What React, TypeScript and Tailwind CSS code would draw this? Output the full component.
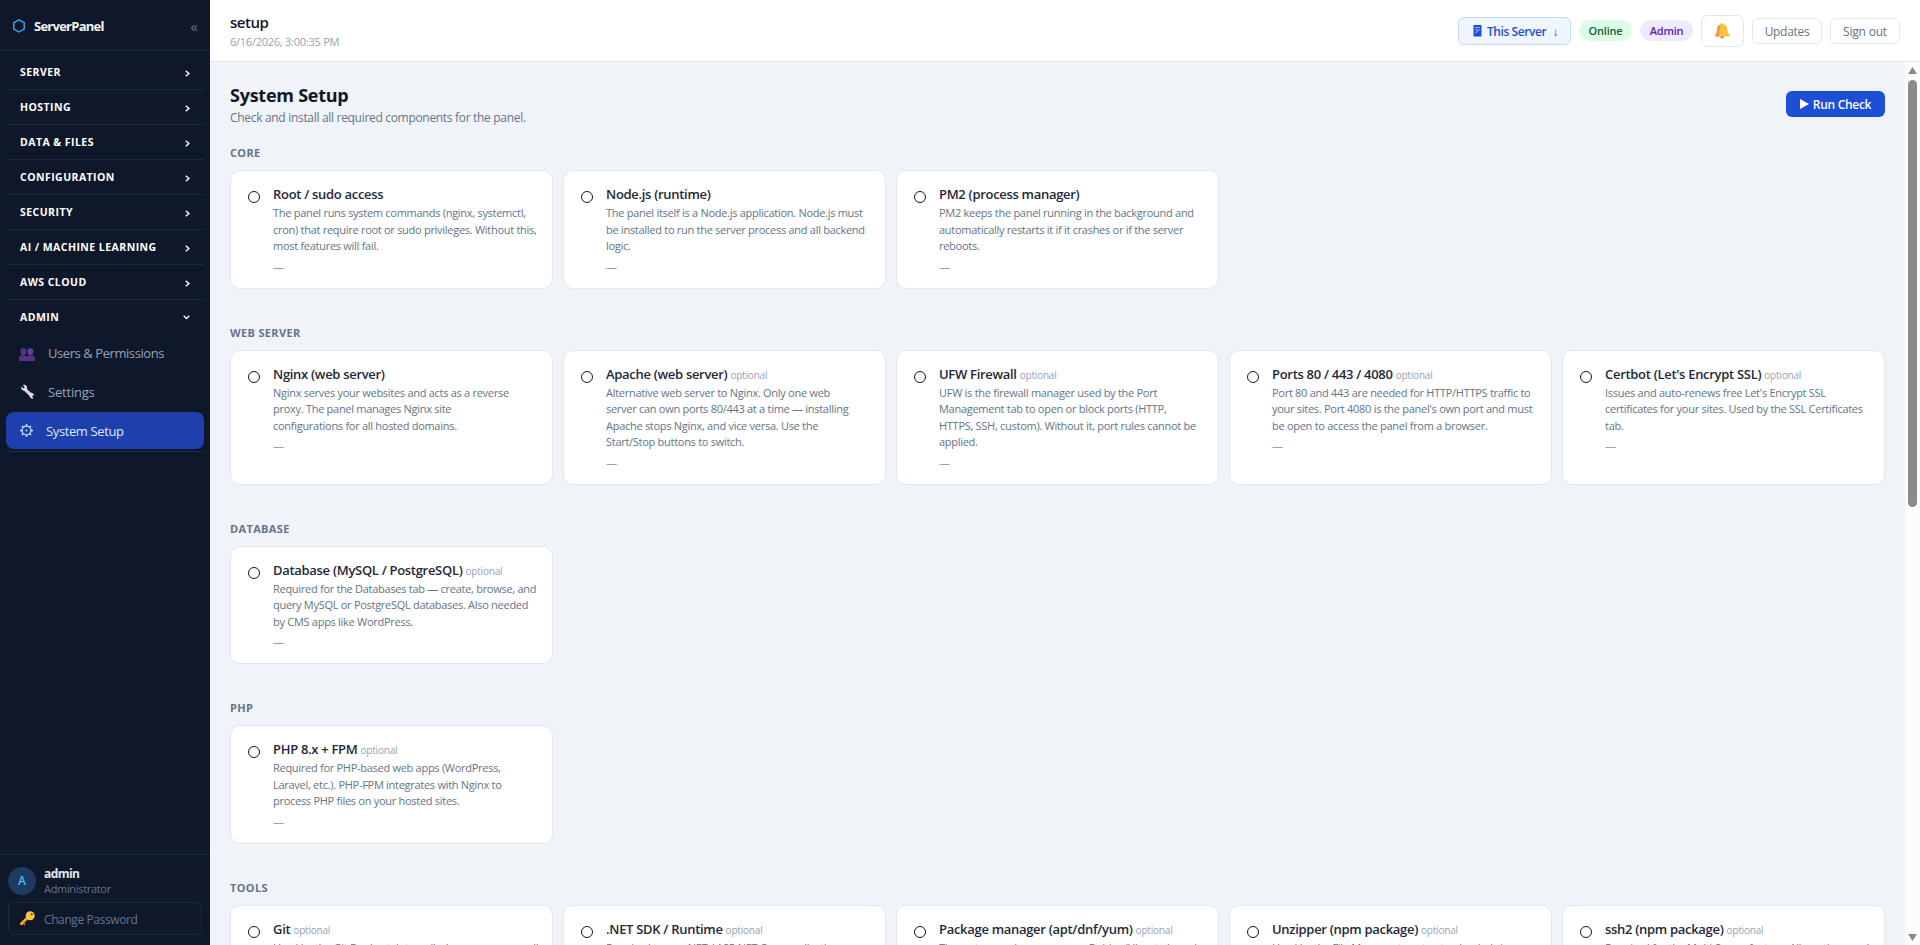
import React from "react";

type Item = { name: string; optional?: boolean; desc: string };
type Group = { title: string; items: Item[] };

const groups: Group[] = [
  {
    title: "CORE",
    items: [
      { name: "Root / sudo access", desc: "The panel runs system commands (nginx, systemctl,\ncron) that require root or sudo privileges. Without this,\nmost features will fail." },
      { name: "Node.js (runtime)", desc: "The panel itself is a Node.js application. Node.js must\nbe installed to run the server process and all backend\nlogic." },
      { name: "PM2 (process manager)", desc: "PM2 keeps the panel running in the background and\nautomatically restarts it if it crashes or if the server\nreboots." },
    ],
  },
  {
    title: "WEB SERVER",
    items: [
      { name: "Nginx (web server)", desc: "Nginx serves your websites and acts as a reverse\nproxy. The panel manages Nginx site\nconfigurations for all hosted domains." },
      { name: "Apache (web server)", optional: true, desc: "Alternative web server to Nginx. Only one web\nserver can own ports 80/443 at a time — installing\nApache stops Nginx, and vice versa. Use the\nStart/Stop buttons to switch." },
      { name: "UFW Firewall", optional: true, desc: "UFW is the firewall manager used by the Port\nManagement tab to open or block ports (HTTP,\nHTTPS, SSH, custom). Without it, port rules cannot be\napplied." },
      { name: "Ports 80 / 443 / 4080", optional: true, desc: "Port 80 and 443 are needed for HTTP/HTTPS traffic to\nyour sites. Port 4080 is the panel's own port and must\nbe open to access the panel from a browser." },
      { name: "Certbot (Let's Encrypt SSL)", optional: true, desc: "Issues and auto-renews free Let's Encrypt SSL\ncertificates for your sites. Used by the SSL Certificates\ntab." },
    ],
  },
  {
    title: "DATABASE",
    items: [
      { name: "Database (MySQL / PostgreSQL)", optional: true, desc: "Required for the Databases tab — create, browse, and\nquery MySQL or PostgreSQL databases. Also needed\nby CMS apps like WordPress." },
    ],
  },
  {
    title: "PHP",
    items: [
      { name: "PHP 8.x + FPM", optional: true, desc: "Required for PHP-based web apps (WordPress,\nLaravel, etc.). PHP-FPM integrates with Nginx to\nprocess PHP files on your hosted sites." },
    ],
  },
  {
    title: "TOOLS",
    items: [
      { name: "Git", optional: true, desc: "Used by the Git Deploy tab to pull, clone, or manage all\nrepositories on the server.\n" },
      { name: ".NET SDK / Runtime", optional: true, desc: "Required to run .NET / ASP.NET Core applications\non the server.\n" },
      { name: "Package manager (apt/dnf/yum)", optional: true, desc: "The system package manager. Debian/Ubuntu based\nservers use apt.\n" },
      { name: "Unzipper (npm package)", optional: true, desc: "Used by the File Manager to extract uploaded zip\narchives.\n" },
      { name: "ssh2 (npm package)", optional: true, desc: "Required for the Multi-Server feature. Allows the panel\nto connect over SSH.\n" },
    ],
  },
];

const sections = ["SERVER", "HOSTING", "DATA & FILES", "CONFIGURATION", "SECURITY", "AI / MACHINE LEARNING", "AWS CLOUD"];

function UsersIcon() {
  return (
    <svg width="16" height="13" viewBox="0 0 16 13" fill="#553285">
      <ellipse cx="4.3" cy="3.6" rx="3" ry="3.6" />
      <path d="M0 13v-3q0-2 2.5-2.4h3.6Q8 8 8 10v3z" />
      <ellipse cx="11.3" cy="3.6" rx="3" ry="3.6" fill="#613c97" />
      <path d="M7.6 13v-3q0-2 2.5-2.4h3.4Q16 8 16 10v3z" />
    </svg>
  );
}

function WrenchIcon() {
  return (
    <svg width="15" height="15" viewBox="0 0 15 15">
      <path d="M4.5 4.8 12 12" stroke="#d9cfe3" strokeWidth="3.2" />
      <path d="M1.2 2.6 3.6 4.6 4.8 3.2 2.8.9Q6.4.1 7 3.2 7.3 6.5 4 6.8 1 6.4 1.2 2.6z" fill="#e9e2ef" />
      <path d="M9.4 11.4q-.2-2.6 2.6-2.6l2.4 2.2-1.8.4-.4 1.2 1.5 1.8q-3.6.6-4.3-3z" fill="#e3d9ea" />
    </svg>
  );
}

function GearIcon() {
  return (
    <svg width="13" height="13" viewBox="0 0 13 13" fill="none" stroke="#c9defc">
      <circle cx="6.5" cy="6.5" r="4.4" strokeWidth="1.3" />
      <circle cx="6.5" cy="6.5" r="1" fill="#c9defc" stroke="none" />
      <path d="M6.5 0v2M6.5 11v2M0 6.5h2M11 6.5h2M1.9 1.9l1.4 1.4M9.7 9.7l1.4 1.4M1.9 11.1l1.4-1.4M9.7 3.3l1.4-1.4" strokeWidth="1.4" />
    </svg>
  );
}

function KeyIcon() {
  return (
    <svg width="15" height="15" viewBox="0 0 15 15">
      <path d="M8.6 5.8 1.4 12.8" stroke="#f9a13c" strokeWidth="2.8" strokeLinecap="round" />
      <path d="m3.6 12.6 1.4 1" stroke="#f9a13c" strokeWidth="1.4" />
      <circle cx="10.2" cy="4.8" r="4.5" fill="#fcc63c" />
      <circle cx="11.7" cy="3.2" r="1" fill="#3a2c14" />
    </svg>
  );
}

function BellIcon() {
  return (
    <svg width="15" height="16" viewBox="0 0 15 16">
      <path d="M7 0q1 0 1.2 1.2Q12 2 12.2 6q.2 4 2.6 6v1.6H.4V12Q2 10 2.2 6 2.6 2 5.9 1.2 6 0 7 0z" fill="#fbc23c" />
      <path d="M.4 12Q2 10 2.2 6 2.6 2 5.6 1.4 4 7 4 13.6H.4z" fill="#f5973c" />
      <path d="M5.2 13.6h4q-.2 2-2 2t-2-2z" fill="#e8743c" />
    </svg>
  );
}

function NavHead({ label, open }: { label: string; open?: boolean }) {
  return (
    <div className="flex h-[34px] items-center justify-between pl-3.5 pr-[14px] text-white">
      <span className="pt-px text-[10.5px] font-bold tracking-[0.45px]">{label}</span>
      {open ? (
        <svg width="7" height="5" viewBox="0 0 7 5" fill="none" stroke="currentColor" strokeWidth="1.3">
          <path d="M.7.7 3.5 3.5 6.3.7" />
        </svg>
      ) : (
        <svg className="mt-0.5" width="5" height="7" viewBox="0 0 5 7" fill="none" stroke="currentColor" strokeWidth="1.4">
          <path d="M.8.7 3.9 3.5.8 6.3" />
        </svg>
      )}
    </div>
  );
}

function Sidebar() {
  return (
    <aside className="flex w-[210px] shrink-0 flex-col bg-[#0f172a]">
      <div className="flex h-[51px] items-center border-b border-slate-800 pl-[13px] pr-3">
        <svg className="mt-px" width="12" height="14" viewBox="0 0 12 14" fill="none" stroke="#38a8f0" strokeWidth="1.4">
          <path d="M6 .9 11.2 3.7v6.4L6 13 .8 10.1V3.7z" />
        </svg>
        <span className="ml-[9px] mt-1 text-[13px] font-bold tracking-[-0.75px] text-slate-100">ServerPanel</span>
        <span className="ml-auto mt-0.5 text-[15px] text-[#64748b]">«</span>
      </div>
      <nav className="flex-1 px-1.5 pt-1">
        {sections.map((s) => (
          <div key={s} className="border-b border-slate-800">
            <NavHead label={s} />
          </div>
        ))}
        <div className="border-b border-slate-800">
          <NavHead label="ADMIN" open />
          <div className="mb-0.5 flex h-[37px] items-center pl-[13px] text-[13px] tracking-[-0.43px] text-[#94a3b8]">
            <span className="mt-1"><UsersIcon /></span>
            <span className="ml-[13px] pt-0.5">Users &amp; Permissions</span>
          </div>
          <div className="mb-0.5 flex h-[37px] items-center pl-3.5 text-[13px] tracking-[-0.2px] text-[#94a3b8]">
            <WrenchIcon />
            <span className="ml-[13px] pt-0.5">Settings</span>
          </div>
          <div className="mb-0.5 flex h-[37px] items-center rounded-lg bg-[#1e40af] pl-3.5 text-[13px] tracking-[-0.38px] text-[#dbeafe]">
            <GearIcon />
            <span className="ml-[13px] pt-0.5">System Setup</span>
          </div>
        </div>
      </nav>
      <div className="border-t border-slate-800 px-2 py-2.5">
        <div className="flex h-8 items-center">
          <div className="flex size-7 items-center justify-center rounded-full bg-[#1e3a5f] text-xs font-semibold text-[#38bdf8]">A</div>
          <div className="ml-2">
            <div className="text-xs font-bold leading-[15px] tracking-[-0.55px] text-slate-200">admin</div>
            <div className="text-[11px] leading-[15px] tracking-[-0.32px] text-[#64748b]">Administrator</div>
          </div>
        </div>
        <button className="mt-[5px] flex h-[33px] w-full items-center rounded-md border border-slate-800 pl-[11px] text-xs text-[#64748b]">
          <KeyIcon />
          <span className="ml-[9px] mt-0.5 tracking-[-0.4px]">Change Password</span>
        </button>
      </div>
    </aside>
  );
}

function Header() {
  return (
    <header className="flex h-[62px] shrink-0 items-center border-b border-slate-200 bg-white px-5">
      <div className="pt-0.5">
        <div className="text-[15px] font-semibold leading-5 tracking-[-0.45px] text-[#0f172a]">setup</div>
        <div className="text-[11px] leading-[19px] tracking-[-0.25px] text-[#94a3b8]">6/16/2026, 3:00:35 PM</div>
      </div>
      <div className="ml-auto flex items-center gap-2">
        <button className="flex h-7 w-[113px] items-center rounded-md border border-[#bfdbfe] bg-[#eff6ff] pl-3.5 text-xs font-semibold text-[#1d4ed8]">
          <svg width="9" height="12" viewBox="0 0 9 12">
            <path d="M.5 0h8v11.5h-8z" fill="#1d4ed8" />
            <path d="M2 2.5h5M2 5h5M2 7.5l3-1" stroke="#8fb2f5" />
          </svg>
          <span className="ml-[5px] pt-0.5 tracking-[-0.42px]">This Server</span>
          <span className="ml-[6px] pt-0.5 font-normal">↓</span>
        </button>
        <span className="flex h-[21px] w-[53px] items-center justify-center rounded-full bg-[#dcfce7] pt-px text-[11px] font-semibold tracking-[-0.2px] text-[#166534]">Online</span>
        <span className="flex h-[21px] w-[53px] items-center justify-center rounded-full bg-[#ede9fe] pt-px text-[11px] font-semibold tracking-[-0.2px] text-[#5b21b6]">Admin</span>
        <button className="flex h-8 w-[43px] items-center justify-center rounded-md border border-slate-200"><BellIcon /></button>
        <button className="h-[26px] w-[70px] rounded-md border border-slate-200 pt-0.5 text-xs tracking-[-0.3px] text-[#64748b]">Updates</button>
        <button className="h-[26px] w-[70px] rounded-md border border-slate-200 pt-0.5 text-xs tracking-[-0.2px] text-[#64748b]">Sign out</button>
      </div>
    </header>
  );
}

function Card({ item }: { item: Item }) {
  return (
    <div className="flex rounded-[10px] border border-slate-200 bg-white pb-[13px] pl-[17px] pt-[13px]">
      <svg className="mt-[7px] shrink-0" width="12" height="12" viewBox="0 0 12 12" fill="none" stroke="#0f172a">
        <circle cx="6" cy="6" r="5.5" />
      </svg>
      <div className="ml-[13px] whitespace-nowrap">
        <div className="h-[21px] text-[13px] font-semibold leading-5 tracking-[-0.3px] text-[#1e293b]">
          {item.name}
          {item.optional && <span className="ml-[3px] text-[10px] font-normal leading-none tracking-[-0.2px] text-[#94a3b8]">optional</span>}
        </div>
        <div className="whitespace-pre-line text-[11px] leading-[16.5px] tracking-[-0.28px] text-[#64748b]">{item.desc}</div>
        <div className="mt-[3px] text-[11px] leading-[17px] text-[#94a3b8]">—</div>
      </div>
    </div>
  );
}

function App() {
  return (
    <div className="flex h-[945px] w-full overflow-hidden font-['Open_Sans','Noto_Sans',sans-serif]">
      <Sidebar />
      <div className="flex min-w-0 flex-1 flex-col">
        <Header />
        <div className="flex min-h-0 flex-1">
          <main className="min-w-0 flex-1 overflow-hidden bg-[#f0f4f9] px-5 pt-5">
            <div className="flex h-[45.4px] items-center justify-between">
              <div className="pt-0.5">
                <h1 className="text-lg font-bold leading-[25px] tracking-[-0.25px] text-[#0f172a]">System Setup</h1>
                <p className="text-xs leading-[20px] tracking-[-0.31px] text-[#64748b]">Check and install all required components for the panel.</p>
              </div>
              <button className="mb-px flex h-[26px] w-[99px] items-center justify-center gap-1 rounded-md bg-[#1d4ed8] text-xs font-semibold text-white">
                <svg width="9" height="10" viewBox="0 0 9 10" fill="currentColor"><path d="M0 0l9 5-9 5z" /></svg>
                <span className="pt-px tracking-[-0.3px]">Run Check</span>
              </button>
            </div>
            {groups.map((g) => (
              <section key={g.title} className="mb-[17.9px] pt-[18.1px]">
                <h2 className="mb-[9px] text-[11px] font-bold leading-4 tracking-[0.35px] text-[#64748b]">{g.title}</h2>
                <div className="grid grid-cols-5 gap-2.5">
                  {g.items.map((item) => (
                    <Card key={item.name} item={item} />
                  ))}
                </div>
              </section>
            ))}
          </main>
          <div className="flex w-[15px] flex-col items-center bg-[#fcfcfc] pb-1 pt-[5px]">
            <svg width="9" height="7" viewBox="0 0 9 7" fill="#8b8b8b"><path d="M4.5 0 9 7H0z" /></svg>
            <div className="mt-1.5 h-[427px] w-[9px] rounded-full bg-[#8b8b8b]" />
            <svg className="mt-auto" width="9" height="7" viewBox="0 0 9 7" fill="#8b8b8b"><path d="M4.5 7 0 0h9z" /></svg>
          </div>
        </div>
      </div>
    </div>
  );
}

export default App;
